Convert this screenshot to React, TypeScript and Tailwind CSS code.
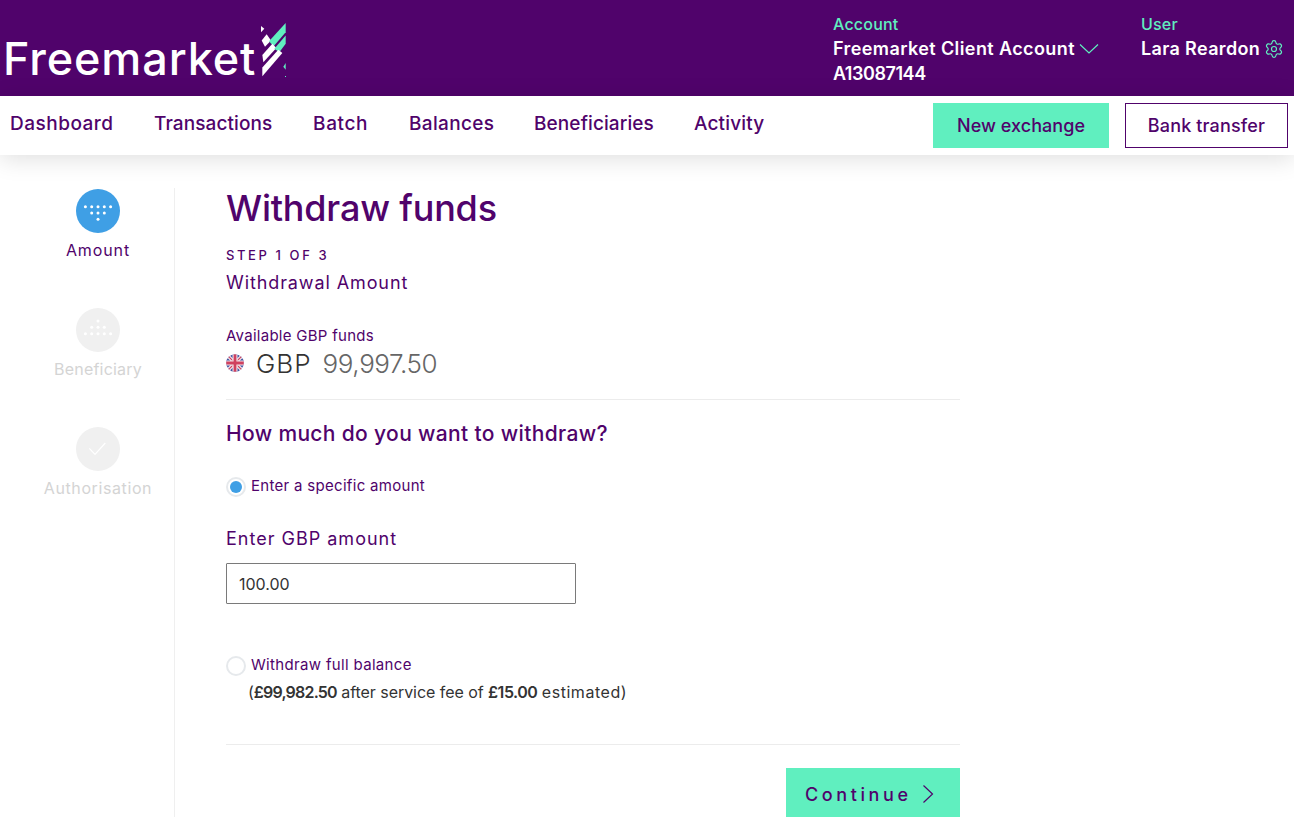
import React from "react";
import { Settings } from "lucide-react";

const F = "font-['Inter','Liberation_Sans',sans-serif]";

function Dots({ up = false }: { up?: boolean }) {
  const rows: number[][] = up ? [[0], [-6.3, 0, 6.3], [-12.6, -6.3, 0, 6.3, 12.6]] : [[-12.6, -6.3, 0, 6.3, 12.6], [-6.3, 0, 6.3], [0]];
  const ys = up ? [-9, -2.7, 3.7] : [-4.3, 2, 8.3];
  return (
    <svg width="44" height="44" viewBox="-22 -22 44 44" fill="white">
      {rows.map((r, i) => r.map((x) => <circle key={`${i}${x}`} cx={x} cy={ys[i]} r={1.5} />))}
    </svg>
  );
}

function Logo() {
  const s = (pts: number[][]) => pts.map((p) => `${p[0] / 3},${(15 + (p[1] - 28) * 1.25) / 3}`).join(" ");
  return (
    <svg width="36" height="62" viewBox="0 0 36 62" className="mt-[18px] ml-[-1px] shrink-0">
      <polygon points={s([[18, 35], [28, 42], [18, 50]])} fill="white" />
      <polygon points={s([[20, 70], [35, 55], [48, 70], [30, 85]])} fill="white" />
      <polygon points={s([[42, 72], [92, 28], [92, 50], [56, 84]])} fill="#60efbf" />
      <polygon points={s([[22, 105], [52, 78], [64, 88], [25, 122]])} fill="white" />
      <polygon points={s([[58, 90], [92, 58], [92, 78], [73, 98]])} fill="#60efbf" />
      <polygon points={s([[22, 135], [70, 92], [82, 100], [22, 156]])} fill="white" />
      <polygon points={s([[92, 124], [85, 133], [92, 140]])} fill="#60efbf" />
      <rect x="30" y="58" width="1" height="1" fill="#60efbf" />
    </svg>
  );
}

function Step({ label, active, check, up, wClass }: { label: string; active?: boolean; check?: boolean; up?: boolean; wClass: string }) {
  return (
    <div className="flex flex-col items-center h-[119px]">
      <div className={`w-[44px] h-[44px] rounded-full flex items-center justify-center ${active ? "bg-[#3f9fe5]" : "bg-[#f0f0f0]"}`}>
        {check ? (
          <svg width="20" height="20" viewBox="0 0 20 20" fill="none" stroke="white" strokeWidth="1.2"><path d="M1.3 9.3L7 15.3 17.3 4" /></svg>
        ) : (
          <Dots up={up} />
        )}
      </div>
      <div className={`mt-[7px] text-[16px] leading-[20px] whitespace-nowrap ${wClass} ${active ? "text-[#50036b]" : "text-[#d4d4d4]"}`}>{label}</div>
    </div>
  );
}

function FlagUK() {
  return (
    <svg width="18" height="18" viewBox="0 0 18 18" className="shrink-0">
      <clipPath id="f"><circle cx="9" cy="9" r="8.8" /></clipPath>
      <g clipPath="url(#f)">
        <rect width="18" height="18" fill="#3f4f9f" />
        <path d="M0 0l18 18M18 0L0 18" stroke="#f2e6ea" strokeWidth="3.5" />
        <path d="M0 0l18 18M18 0L0 18" stroke="#d0415f" strokeWidth="1.2" />
        <path d="M9 0v18M0 9h18" stroke="#f2e6ea" strokeWidth="5" />
        <path d="M9 0v18M0 9h18" stroke="#d0415f" strokeWidth="2.8" />
      </g>
    </svg>
  );
}

export default function App() {
  const nav: [string, string][] = [
    ["Dashboard", "w-[144px] tracking-[0.5px]"],
    ["Transactions", "w-[159px] tracking-[0.1px]"],
    ["Batch", "w-[96px] tracking-[0.65px]"],
    ["Balances", "w-[125px] tracking-[0.35px]"],
    ["Beneficiaries", "w-[160px] tracking-[0.1px]"],
    ["Activity", "w-[80px] tracking-[0.15px]"],
  ];
  return (
    <div className={`min-h-[834px] bg-white ${F}`}>
      <header className="h-[96px] bg-[#50036b] flex items-start">
        <div className="pl-[3px] flex items-start h-[96px]">
          <span className="mt-[34px] text-white text-[45px] leading-[50px] font-medium tracking-[0.9px]">Freemarket</span>
          <Logo />
        </div>
        <div className="ml-auto flex items-start pt-[12px]">
          <div className="w-[308px]">
            <div className="text-[#60efbf] text-[16px] leading-[24px] font-medium tracking-[0.2px]">Account</div>
            <div className="flex items-center text-white text-[18px] leading-[25px] font-semibold tracking-[0.4px]">
              Freemarket Client Account
              <svg width="20" height="12" viewBox="0 0 20 12" fill="none" stroke="#60efbf" strokeWidth="1.2" className="ml-[4px]"><path d="M1 1.5l9 8.5 9-8.5" /></svg>
            </div>
            <div className="text-white text-[18px] leading-[25px] font-semibold tracking-[-0.45px]">A13087144</div>
          </div>
          <div className="w-[153px]">
            <div className="text-[#60efbf] text-[16px] leading-[24px] font-medium tracking-[0.2px]">User</div>
            <div className="flex items-center text-white text-[18px] leading-[25px] font-semibold tracking-[0.35px]">
              Lara Reardon
              <Settings size={20} strokeWidth={1.4} color="#60efbf" className="ml-[4px]" />
            </div>
          </div>
        </div>
      </header>

      <nav className="h-[59px] flex items-center pl-[10px] pr-[6px] shadow-[0_4px_24px_rgba(0,0,0,0.13)] relative bg-white">
        {nav.map(([n, w]) => (
          <a key={n} className={`${w} text-[#50036b] text-[19px] font-medium pb-[3px]`}>{n}</a>
        ))}
        <div className="ml-auto flex gap-[16px]">
          <button className="w-[176px] h-[45px] bg-[#60efbf] text-[#50036b] text-[18px] font-medium tracking-[0.05px]">New exchange</button>
          <button className="w-[163px] h-[45px] border border-[#50036b] text-[#50036b] text-[18px] font-medium tracking-[0.15px]">Bank transfer</button>
        </div>
      </nav>

      <div className="flex pt-[33px]">
        <aside className="w-[175px] h-[629px] border-r border-[#efefef] shrink-0 pl-[22px] pt-[1px] flex flex-col">
          <Step label="Amount" active wClass="tracking-[0.9px]" />
          <Step label="Beneficiary" up wClass="tracking-[0.2px]" />
          <Step label="Authorisation" check wClass="tracking-[0.6px]" />
        </aside>
        <main className="ml-[51px] w-[734px]">
          <h1 className="text-[36px] leading-[40px] text-[#50036b] font-medium tracking-[-0.2px]">Withdraw funds</h1>
          <div className="mt-[18px] text-[13px] leading-[18px] text-[#50036b] font-medium tracking-[2.6px]">STEP 1 OF 3</div>
          <div className="mt-[7px] text-[18px] leading-[24px] text-[#50036b] tracking-[0.9px]">Withdrawal Amount</div>
          <div className="mt-[31px] text-[15px] leading-[20px] text-[#50036b] tracking-[0.27px]">Available GBP funds</div>
          <div className="mt-[2px] flex items-center h-[30px]">
            <FlagUK />
            <span className="ml-[12px] text-[26px] font-light text-[#333333] tracking-[1px]">GBP</span>
            <span className="ml-[11px] text-[26px] font-light text-[#666666] tracking-[-0.4px]">99,997.50</span>
          </div>
          <div className="mt-[21px] border-t border-[#ececec]" />
          <h2 className="mt-[21px] text-[21px] leading-[26px] text-[#50036b] font-medium tracking-[0.35px]">How much do you want to withdraw?</h2>
          <label className="mt-[28px] flex items-center h-[24px]">
            <span className="w-[20px] h-[20px] rounded-full border-2 border-[#e6e9ec] flex items-center justify-center">
              <span className="w-[12px] h-[12px] rounded-full bg-[#3f9fe5]" />
            </span>
            <span className="ml-[5px] pb-[1px] text-[15px] text-[#50036b] tracking-[0.3px]">Enter a specific amount</span>
          </label>
          <div className="mt-[28px] text-[18px] leading-[24px] text-[#50036b] tracking-[1px]">Enter GBP amount</div>
          <div className="mt-[12px] w-[350px] h-[41px] border border-[#7a7a7a] rounded-[1px] flex items-center pl-[12px] text-[16px] text-[#333333]">100.00</div>
          <label className="mt-[50px] flex items-center h-[24px]">
            <span className="w-[20px] h-[20px] rounded-full border-2 border-[#e6e9ec]" />
            <span className="ml-[5px] pb-[1px] text-[15px] text-[#50036b] tracking-[0.33px]">Withdraw full balance</span>
          </label>
          <div className="mt-[2px] ml-[22px] text-[16px] leading-[24px] text-[#333333] tracking-[-0.05px]">
            (<b className="font-semibold tracking-[-0.8px]">£99,982.50</b> after service fee of <b className="font-semibold tracking-[-0.5px]">£15.00</b> <span className="tracking-[0.55px]">estimated</span>)
          </div>
          <div className="mt-[40px] border-t border-[#ececec]" />
          <div className="mt-[23px] flex justify-end">
            <button className="w-[174px] h-[49px] bg-[#60efbf] flex items-center pl-[19px] pt-[3px] text-[#50036b] text-[18px] font-medium tracking-[3.6px]">
              Continue
              <svg width="12" height="20" viewBox="0 0 12 20" fill="none" stroke="#50036b" strokeWidth="1.2" className="ml-[10px]"><path d="M1.5 1.5l9 8.5-9 8.5" /></svg>
            </button>
          </div>
        </main>
      </div>
    </div>
  );
}
